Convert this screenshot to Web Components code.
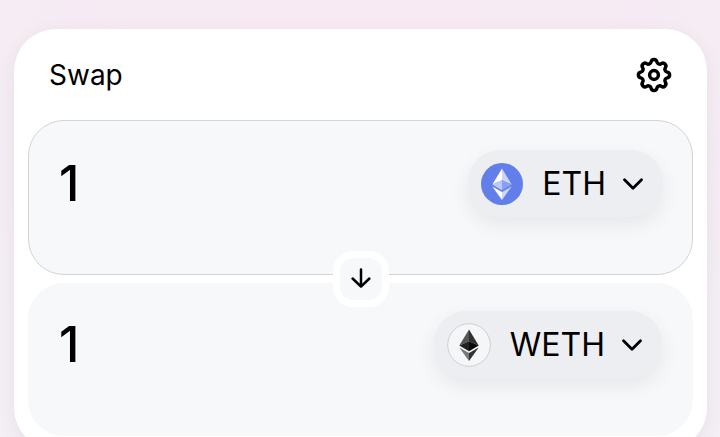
<!DOCTYPE html>
<html lang="en">
<head>
<meta charset="utf-8">
<meta name="viewport" content="width=device-width, initial-scale=1">
<title>Swap</title>
<style>
html { min-height: 100%; }
body {
  margin: 0;
  padding: 29px 13px 0 14px;
  min-height: 100vh;
  box-sizing: border-box;
  overflow: hidden;
  font-family: Inter, "Liberation Sans", sans-serif;
  color: #000;
  background: radial-gradient(ellipse 65% 100% at 50% 0, #f7eaf3, #f6eaf3 50%, #f4eef5);
}
</style>
</head>
<body>
<swap-card heading="Swap">
  <token-panel active label="Amount to sell" amount="1">
    <token-button symbol="ETH"><eth-logo></eth-logo></token-button>
  </token-panel>
  <direction-button></direction-button>
  <token-panel label="Amount to buy" amount="1">
    <token-button symbol="WETH"><eth-logo mono></eth-logo></token-button>
  </token-panel>
</swap-card>
<script>
class BaseElement extends HTMLElement {
  connectedCallback() {
    if (this.shadowRoot) return;
    this.attachShadow({ mode: "open" }).innerHTML =
      "<style>*{box-sizing:border-box}button{font:inherit;color:inherit;border:0;cursor:pointer}svg{display:block}</style>" + this.render();
  }
}

customElements.define("swap-card", class extends BaseElement {
  render() {
    return `<style>
      :host { display: block; background: #fff; border-radius: 42px; padding: 0 14px 14px;
        box-shadow: 0 4px 20px rgba(40, 20, 40, .06); }
      header { display: flex; align-items: center; justify-content: space-between; height: 91px; padding: 0 21px; }
      h1 { margin: 0; font-size: 28px; line-height: 36px; font-weight: 400; }
      main { display: flex; flex-direction: column; }
    </style>
    <header><h1>${this.getAttribute("heading")}</h1><settings-button></settings-button></header>
    <main><slot></slot></main>`;
  }
});

customElements.define("settings-button", class extends BaseElement {
  render() {
    return `<style>:host { display: block; } button { display: block; padding: 0; background: none; }</style>
    <button type="button" aria-label="Settings">
      <svg width="36" height="36" viewBox="0 0 36 36" fill="none" stroke="#000" stroke-width="3.5" stroke-linejoin="round">
        <path d="M31.23 15.15A2.9 2.9 0 0 1 31.23 20.85A2.9 2.9 0 0 0 29.37 25.34A2.9 2.9 0 0 1 25.34 29.37A2.9 2.9 0 0 0 20.85 31.23A2.9 2.9 0 0 1 15.15 31.23A2.9 2.9 0 0 0 10.66 29.37A2.9 2.9 0 0 1 6.63 25.34A2.9 2.9 0 0 0 4.77 20.85A2.9 2.9 0 0 1 4.77 15.15A2.9 2.9 0 0 0 6.63 10.66A2.9 2.9 0 0 1 10.66 6.63A2.9 2.9 0 0 0 15.15 4.77A2.9 2.9 0 0 1 20.85 4.77A2.9 2.9 0 0 0 25.34 6.63A2.9 2.9 0 0 1 29.37 10.66A2.9 2.9 0 0 0 31.23 15.15Z"/>
        <circle cx="18" cy="18" r="4.4"/>
      </svg>
    </button>`;
  }
});

customElements.define("token-panel", class extends BaseElement {
  render() {
    return `<style>
      :host { display: flex; align-items: flex-start; justify-content: space-between;
        background: #f7f8fa; border: 1px solid #f7f8fa; border-radius: 36px; padding: 27px 30px 57px; }
      :host([active]) { border-color: #d2d4da; padding: 29px 29px 57px 30px; }
      label { flex: 1; min-width: 0; display: flex; }
      input { width: 100%; height: 67px; padding: 0; border: 0; outline: 0; background: none;
        font: 500 49px/60px Inter, "Liberation Sans", sans-serif; color: #000; }
    </style>
    <label><input type="text" inputmode="decimal" aria-label="${this.getAttribute("label")}" value="${this.getAttribute("amount")}"></label>
    <slot></slot>`;
  }
});

customElements.define("token-button", class extends BaseElement {
  render() {
    return `<style>
      :host { display: block; flex: none; }
      button { display: flex; align-items: center; height: 67px; padding: 0 19px 0 13px; border-radius: 32px;
        background: #edeef2; box-shadow: 0 8px 20px rgba(0, 0, 0, .07); }
      span { font-size: 32px; line-height: 40px; margin: 0 16px 0 19px; }
    </style>
    <button type="button"><slot></slot><span>${this.getAttribute("symbol")}</span>
      <svg width="22" height="14" viewBox="0 0 22 14" fill="none" stroke="#000" stroke-width="2.8" stroke-linecap="round" stroke-linejoin="round"><path d="M2.5 2.7 11 11.2 19.5 2.7"/></svg>
    </button>`;
  }
});

customElements.define("eth-logo", class extends BaseElement {
  render() {
    const mono = this.hasAttribute("mono");
    const [tl, tr, ml, mr, bl, br] = mono
      ? ["#555", "#303030", "#222", "#0b0b0b", "#777", "#333"]
      : ["#fff", "#ccd6f9", "#bdc9f7", "#8a9ff0", "#fff", "#ccd6f9"];
    return `<style>:host { display: block; }</style>
    <svg width="${mono ? 44 : 42}" height="${mono ? 44 : 42}" viewBox="${mono ? "-1 -1 44 44" : "0 0 42 42"}" aria-hidden="true">
      <circle cx="21" cy="21" r="${mono ? 21.3 : 21}" fill="${mono ? "#f5f6f8" : "#627eea"}" ${mono ? 'stroke="#cfd0d4"' : ""}/>
      <path fill="${tl}" d="M21 5.5 11.3 21.5 21 17.2Z"/>
      <path fill="${tr}" d="M21 5.5 30.7 21.5 21 17.2Z"/>
      <path fill="${ml}" d="M21 17.2 11.3 21.5 21 27.2Z"/>
      <path fill="${mr}" d="M21 17.2 30.7 21.5 21 27.2Z"/>
      <path fill="${bl}" d="M11.3 23.4 21 29.1V37Z"/>
      <path fill="${br}" d="M30.7 23.4 21 29.1V37Z"/>
    </svg>`;
  }
});

customElements.define("direction-button", class extends BaseElement {
  render() {
    return `<style>
      :host { display: flex; justify-content: center; align-items: center; height: 8px; position: relative; z-index: 1; }
      button { flex: none; display: grid; place-items: center; width: 56px; height: 56px; padding: 0;
        background: #f7f8fa; border: 7px solid #fff; border-radius: 20px; }
    </style>
    <button type="button" aria-label="Switch tokens">
      <svg width="22" height="22" viewBox="0 0 22 22" fill="none" stroke="#000" stroke-width="2.5" stroke-linecap="round" stroke-linejoin="round"><path d="M11 1.5V18.5M2.6 10.5 11 18.7 19.4 10.5"/></svg>
    </button>`;
  }
});
</script>
</body>
</html>
